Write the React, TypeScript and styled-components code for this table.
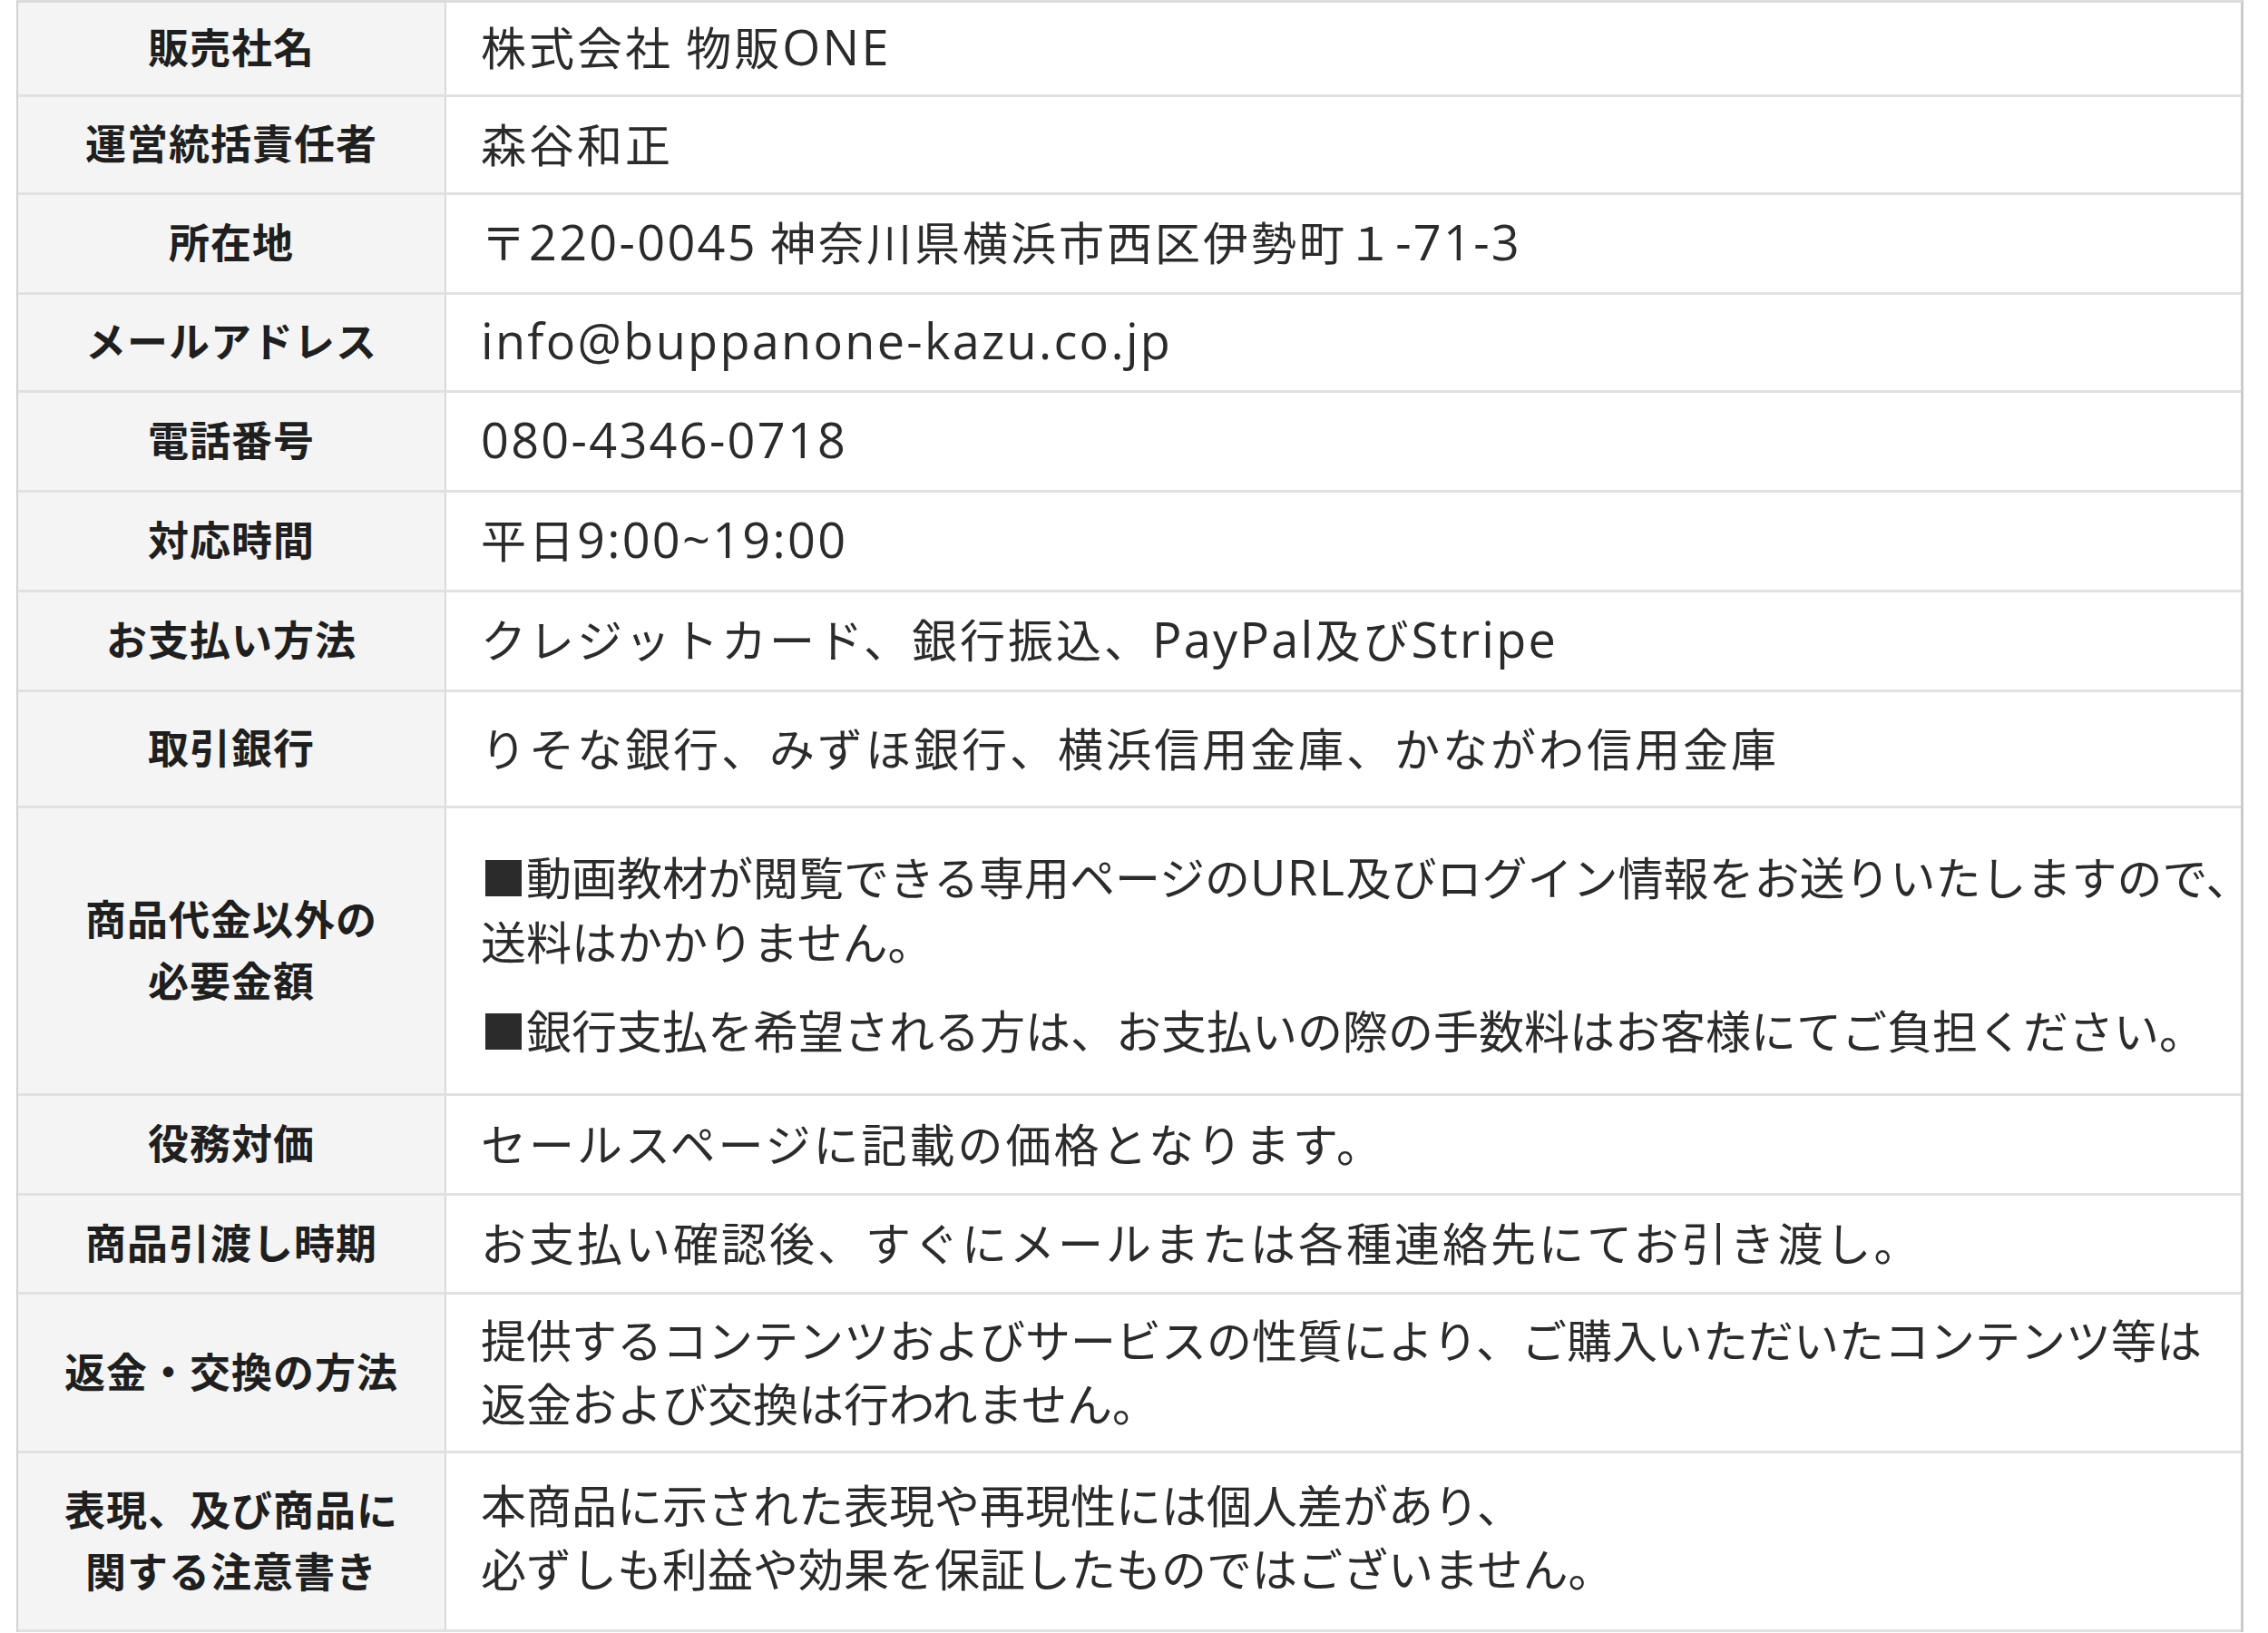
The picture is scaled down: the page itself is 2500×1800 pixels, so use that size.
import React from 'react';
import styled, { createGlobalStyle } from 'styled-components';

const GlobalStyle = createGlobalStyle`
  html, body {
    margin: 0;
    padding: 0;
    background: #ffffff;
  }
  body {
    font-family: "Open Sans", "Noto Sans CJK JP", sans-serif;
    color: #2b2b2b;
  }
`;

const Page = styled.div`
  width: 2500px;
  padding-left: 18px;
  box-sizing: border-box;
`;

const Table = styled.div`
  width: 2455px;
  border-top: 3px solid #dcdcdc;
  border-left: 2px solid #d2d2d2;
  border-right: 3px solid #cbcbcb;
  box-sizing: border-box;
`;

const Row = styled.div<{ $h: number }>`
  display: grid;
  grid-template-columns: 472px 1fr;
  height: ${(p) => p.$h}px;
  border-bottom: 3px solid #e1e1e1;
  box-sizing: border-box;
`;

const Label = styled.div`
  display: flex;
  align-items: center;
  justify-content: center;
  padding-bottom: 5px;
  background: #f4f4f4;
  border-right: 2px solid #d9d9d9;
  font-family: "Noto Sans CJK JP", sans-serif;
  font-weight: 700;
  font-size: 45px;
  line-height: 68px;
  letter-spacing: 1px;
  color: #1f1f1f;
  text-align: center;
`;

const Latin = styled.span`
  font-family: "Open Sans", "Noto Sans CJK JP", sans-serif;
  font-size: 54px;
  letter-spacing: 1.5px;
`;

const Value = styled.div<{ $pt?: number; $pb?: number; $spaced?: boolean }>`
  display: flex;
  flex-direction: column;
  justify-content: center;
  padding: ${(p) => p.$pt ?? 0}px 20px ${(p) => p.$pb ?? 6}px 38px;
  font-family: "Noto Sans CJK JP", sans-serif;
  font-size: 50px;
  line-height: 70px;
  letter-spacing: ${(p) => (p.$spaced ? '3px' : '0')};
  color: #2b2b2b;
  white-space: nowrap;

  ${Latin} {
    letter-spacing: ${(p) => (p.$spaced ? '2.3px' : '1.5px')};
  }
`;

const Para = styled.p`
  margin: 0 0 28px;
  &:last-child {
    margin-bottom: 0;
  }
`;

type RowData = {
  label: React.ReactNode;
  h: number;
  pt?: number;
  pb?: number;
  spaced?: boolean;
  value: React.ReactNode;
};

const rows: RowData[] = [
  {
    label: '販売社名',
    h: 104,
    spaced: true,
    value: (
      <>
        株式会社 物販<Latin>ONE</Latin>
      </>
    ),
  },
  { label: '運営統括責任者', h: 108, spaced: true, value: '森谷和正' },
  {
    label: '所在地',
    h: 110,
    spaced: true,
    value: (
      <>
        〒<Latin>220-0045</Latin> 神奈川県横浜市西区伊勢町１<Latin>-71-3</Latin>
      </>
    ),
  },
  { label: 'メールアドレス', h: 108, spaced: true, value: <Latin>info@buppanone-kazu.co.jp</Latin> },
  { label: '電話番号', h: 110, spaced: true, value: <Latin>080-4346-0718</Latin> },
  {
    label: '対応時間',
    h: 110,
    spaced: true,
    value: (
      <>
        平日<Latin>9:00~19:00</Latin>
      </>
    ),
  },
  {
    label: 'お支払い方法',
    h: 110,
    spaced: true,
    value: (
      <>
        クレジットカード、銀行振込、<Latin>PayPal</Latin>及び<Latin>Stripe</Latin>
      </>
    ),
  },
  { label: '取引銀行', h: 128, spaced: true, value: 'りそな銀行、みずほ銀行、横浜信用金庫、かながわ信用金庫' },
  {
    label: (
      <>
        商品代金以外の
        <br />
        必要金額
      </>
    ),
    h: 317,
    pt: 2,
    pb: 0,
    value: (
      <>
        <Para>
          ■動画教材が閲覧できる専用ページの<Latin>URL</Latin>及びログイン情報をお送りいたしますので、
          <br />
          送料はかかりません。
        </Para>
        <Para>■銀行支払を希望される方は、お支払いの際の手数料はお客様にてご負担ください。</Para>
      </>
    ),
  },
  { label: '役務対価', h: 110, spaced: true, value: 'セールスページに記載の価格となります。' },
  {
    label: '商品引渡し時期',
    h: 109,
    spaced: true,
    value: 'お支払い確認後、すぐにメールまたは各種連絡先にてお引き渡し。',
  },
  {
    label: '返金・交換の方法',
    h: 175,
    value: (
      <>
        提供するコンテンツおよびサービスの性質により、ご購入いただいたコンテンツ等は
        <br />
        返金および交換は行われません。
      </>
    ),
  },
  {
    label: (
      <>
        表現、及び商品に
        <br />
        関する注意書き
      </>
    ),
    h: 197,
    pb: 14,
    value: (
      <>
        本商品に示された表現や再現性には個人差があり、
        <br />
        必ずしも利益や効果を保証したものではございません。
      </>
    ),
  },
];

const App = () => {
  return (
    <Page>
      <GlobalStyle />
      <Table>
        {rows.map((r, i) => (
          <Row key={i} $h={r.h}>
            <Label>
              <div>{r.label}</div>
            </Label>
            <Value $pt={r.pt} $pb={r.pb} $spaced={r.spaced}>
              <div>{r.value}</div>
            </Value>
          </Row>
        ))}
      </Table>
    </Page>
  );
};

export default App;
